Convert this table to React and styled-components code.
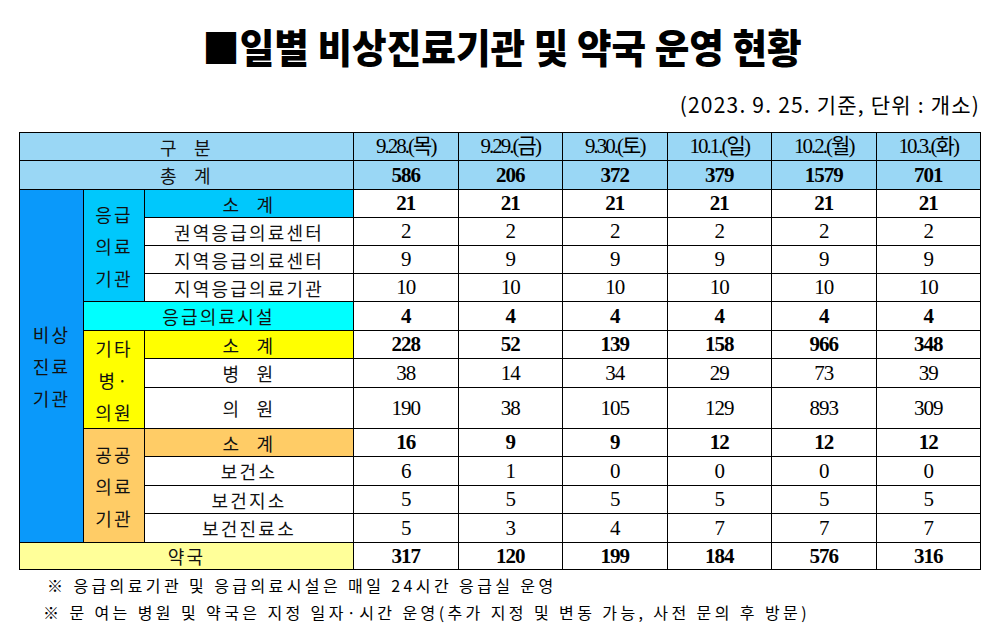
import React from "react";
import styled, { createGlobalStyle } from "styled-components";

const Global = createGlobalStyle`
  html, body { margin: 0; padding: 0; background: #fff; }
  body { font-family: "Noto Sans CJK KR", "Noto Sans", sans-serif; color: #000; }
`;

const Page = styled.div`
  width: 1002px;
  height: 642px;
  box-sizing: border-box;
  padding: 0 22px 0 19px;
  display: flex;
  flex-direction: column;
  overflow: hidden;
`;

const Title = styled.h1`
  margin: 0;
  height: 92px;
  display: flex;
  align-items: center;
  justify-content: center;
  font-family: "Noto Sans CJK KR", sans-serif;
  font-weight: 900;
  font-size: 40px;
  line-height: 1;
  padding-left: 4px;
`;

const TitleText = styled.span`
  display: inline-block;
  transform: scaleX(0.94);
  white-space: nowrap;
`;

const Sub = styled.div`
  height: 24px;
  line-height: 24px;
  text-align: right;
  font-family: "Noto Sans CJK KR", sans-serif;
  font-size: 21px;
  letter-spacing: 1.2px;
  margin-bottom: 16px;
`;

const Table = styled.table`
  width: 961px;
  table-layout: fixed;
  border-collapse: collapse;
  border: 1px solid #000;
`;

const Row = styled.tr`
  height: ${(p) => p.$h}px;
`;

const palette = {
  head: "#9ad7f5",
  blue: "#0a99fa",
  sky: "#00c8fc",
  cyan: "#00ffff",
  yellow: "#ffff00",
  orange: "#ffcc66",
  pale: "#ffff99",
  white: "#ffffff",
};

const Label = styled.td`
  border: 1px solid #000;
  padding: 0;
  text-align: center;
  vertical-align: middle;
  background: ${(p) => palette[p.$bg || "white"]};
  font-family: "Noto Sans CJK KR", sans-serif;
  font-size: 18px;
  letter-spacing: 2.2px;
  word-spacing: 9px;
  line-height: ${(p) => (p.$stack ? "32px" : "1")};
  color: #111;
  white-space: pre-line;
`;

const Num = styled.td`
  border: 1px solid #000;
  padding: 0;
  text-align: center;
  vertical-align: middle;
  background: ${(p) => palette[p.$bg || "white"]};
  font-family: "Liberation Serif", "Noto Sans CJK KR", serif;
  font-size: 21px;
  font-weight: ${(p) => (p.$bold ? 700 : 400)};
  letter-spacing: ${(p) => (p.$date ? "-2px" : "-1px")};
  line-height: 1;
`;

const Notes = styled.div`
  margin-top: 2px;
  padding-left: 24px;
  font-family: "Noto Sans CJK KR", sans-serif;
  font-size: 16px;
  letter-spacing: 3.4px;
  line-height: 27px;
`;

const Note = styled.div`
  padding-left: ${(p) => p.$indent || 0}px;
  white-space: nowrap;
`;

const dates = ["9.28.(목)", "9.29.(금)", "9.30.(토)", "10.1.(일)", "10.2.(월)", "10.3.(화)"];

const Vals = ({ values, bold, bg }) =>
  values.map((v, i) => (
    <Num key={i} $bold={bold} $bg={bg}>
      {v}
    </Num>
  ));

export default function App() {
  return (
    <>
      <Global />
      <Page>
        <Title>
          <TitleText>■일별 비상진료기관 및 약국 운영 현황</TitleText>
        </Title>
        <Sub>(2023. 9. 25. 기준, 단위 : 개소)</Sub>
        <Table>
          <colgroup>
            <col style={{ width: 64 }} />
            <col style={{ width: 61 }} />
            <col style={{ width: 209 }} />
            {dates.map((d) => (
              <col key={d} style={{ width: 104.5 }} />
            ))}
          </colgroup>
          <tbody>
            <Row $h={28}>
              <Label colSpan={3} $bg="head">구 분</Label>
              {dates.map((d) => (
                <Num key={d} $bg="head" $date>
                  {d}
                </Num>
              ))}
            </Row>
            <Row $h={29}>
              <Label colSpan={3} $bg="head">총 계</Label>
              <Vals values={[586, 206, 372, 379, 1579, 701]} bold bg="head" />
            </Row>
            <Row $h={28}>
              <Label rowSpan={12} $bg="blue" $stack>{"비상\n진료\n기관"}</Label>
              <Label rowSpan={4} $bg="sky" $stack>{"응급\n의료\n기관"}</Label>
              <Label $bg="sky">소 계</Label>
              <Vals values={[21, 21, 21, 21, 21, 21]} bold />
            </Row>
            <Row $h={28}>
              <Label>권역응급의료센터</Label>
              <Vals values={[2, 2, 2, 2, 2, 2]} />
            </Row>
            <Row $h={28}>
              <Label>지역응급의료센터</Label>
              <Vals values={[9, 9, 9, 9, 9, 9]} />
            </Row>
            <Row $h={28}>
              <Label>지역응급의료기관</Label>
              <Vals values={[10, 10, 10, 10, 10, 10]} />
            </Row>
            <Row $h={29}>
              <Label colSpan={2} $bg="cyan">응급의료시설</Label>
              <Vals values={[4, 4, 4, 4, 4, 4]} bold />
            </Row>
            <Row $h={28}>
              <Label rowSpan={3} $bg="yellow" $stack>{"기타\n병·\n의원"}</Label>
              <Label $bg="yellow">소 계</Label>
              <Vals values={[228, 52, 139, 158, 966, 348]} bold />
            </Row>
            <Row $h={29}>
              <Label>병 원</Label>
              <Vals values={[38, 14, 34, 29, 73, 39]} />
            </Row>
            <Row $h={41}>
              <Label>의 원</Label>
              <Vals values={[190, 38, 105, 129, 893, 309]} />
            </Row>
            <Row $h={28}>
              <Label rowSpan={4} $bg="orange" $stack>{"공공\n의료\n기관"}</Label>
              <Label $bg="orange">소 계</Label>
              <Vals values={[16, 9, 9, 12, 12, 12]} bold />
            </Row>
            <Row $h={29}>
              <Label>보건소</Label>
              <Vals values={[6, 1, 0, 0, 0, 0]} />
            </Row>
            <Row $h={28}>
              <Label>보건지소</Label>
              <Vals values={[5, 5, 5, 5, 5, 5]} />
            </Row>
            <Row $h={29}>
              <Label>보건진료소</Label>
              <Vals values={[5, 3, 4, 7, 7, 7]} />
            </Row>
            <Row $h={27}>
              <Label colSpan={3} $bg="pale">약국</Label>
              <Vals values={[317, 120, 199, 184, 576, 316]} bold />
            </Row>
          </tbody>
        </Table>
        <Notes>
          <Note $indent={4}>※ 응급의료기관 및 응급의료시설은 매일 24시간 응급실 운영</Note>
          <Note>※ 문 여는 병원 및 약국은 지정 일자·시간 운영(추가 지정 및 변동 가능, 사전 문의 후 방문)</Note>
        </Notes>
      </Page>
    </>
  );
}
